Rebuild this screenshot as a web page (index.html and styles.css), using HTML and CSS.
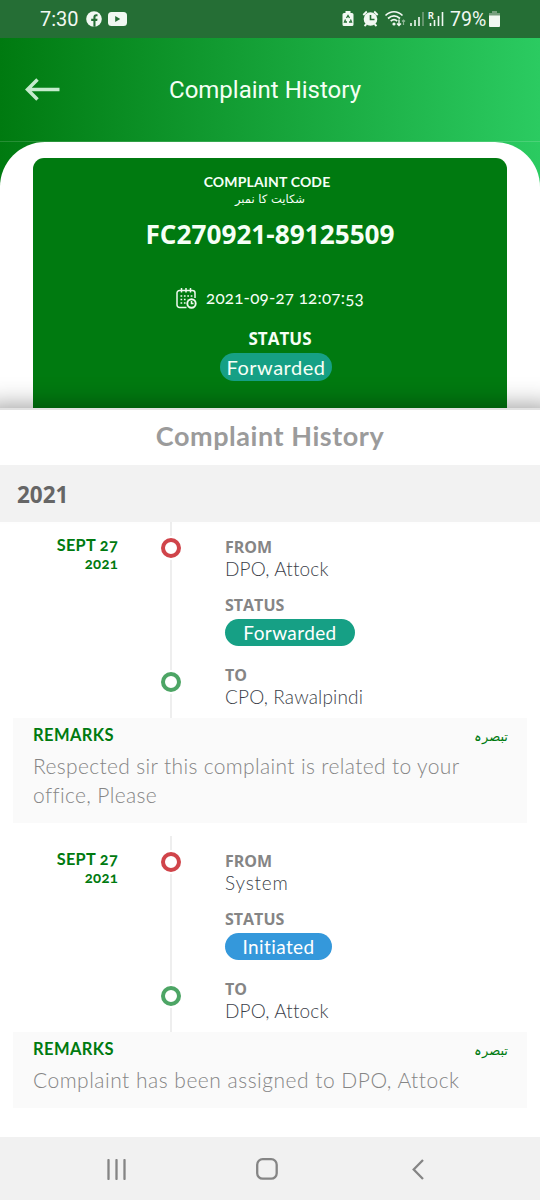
FILE: index.html
```html
<!DOCTYPE html>
<html lang="en">
<head>
    <meta charset="UTF-8">
    <title>Complaint History</title>
    <link rel="stylesheet" href="styles.css">
</head>
<body>
    <div class="statusbar">
        <span class="clock">7:30</span>
        <svg width="16" height="16" viewBox="0 0 16 16"><circle cx="8" cy="8" r="7.8" fill="#f1f8f2"/><path d="M7.400 15.800V9.900H5.200V7.700h2.200V6.200c0-2 1-3 2.900-3h1.200v2h-1c-.8 0-1 .4-1 1.100v1.400h2l-.3 2.200H9.500v5.900z" fill="#256e35"/></svg>
        <svg class="yt" width="19" height="14" viewBox="0 0 19 14"><rect width="19" height="14" rx="3.500" fill="#f1f8f2"/><path d="M7.200 4v6l5-3z" fill="#256e35"/></svg>
        <div class="status-icons">
            <svg width="106" height="20" viewBox="0 0 106 20">
                <path d="M3.500 4V2h5v2H10a1.500 1.500 0 0 1 1.500 1.500v10A1.500 1.500 0 0 1 10 17H2a1.500 1.500 0 0 1-1.500-1.500v-10A1.500 1.500 0 0 1 2 4z" fill="#f1f8f2"/>
                <path d="M4.500 9L6 6.500 7.500 9M8.500 10.500l1 2.500H7M5 13H2.500l1-2.500" fill="none" stroke="#256e35" stroke-width="1.300"/>
                <circle cx="28.500" cy="10" r="6.800" fill="#f1f8f2"/>
                <path d="M21.300 6l3.500-3.500M35.700 6l-3.500-3.500M24.500 15l-2 2M32.500 15l2 2" stroke="#f1f8f2" stroke-width="1.800"/>
                <path d="M28.500 6v4.500h4" fill="none" stroke="#256e35" stroke-width="1.600"/>
                <path d="M43.500 6.500c5-5 12-5 17 0M46 9.500c4-3.500 8-3.500 12 0M48.700 12.200c2.200-2 4.500-2 6.500 0" fill="none" stroke="#f1f8f2" stroke-width="1.700"/>
                <circle cx="52" cy="15" r="1.600" fill="#f1f8f2"/>
                <path d="M57 10.500v6M55 14.500l2 2 2-2" fill="none" stroke="#f1f8f2" stroke-width="1.400"/>
                <path d="M61.500 16v-5M60 12.500l1.500-1.500 1.500 1.500" fill="none" stroke="#8bb493" stroke-width="1.200"/>
                <path d="M69 17v-3M73 17v-6M77 17V8M88.500 17v-3M92.500 17v-6M96.500 17V7M100.500 17V3" stroke="#f1f8f2" stroke-width="1.600"/>
                <path d="M81 17V3" stroke="#769f7d" stroke-width="1.600"/>
                <text x="86" y="9.500" class="roaming">R</text>
            </svg>
            <span class="battery-text">79%</span>
            <svg width="12" height="16" viewBox="0 0 12 16">
                <path d="M3 0h5v2h3v3H0V2h3z" fill="#769f7d"/>
                <path d="M0 4.500h11V15a1 1 0 0 1-1 1H1a1 1 0 0 1-1-1z" fill="#f1f8f2"/>
            </svg>
        </div>
    </div>
    <header class="header">
        <svg class="back" width="35" height="23" viewBox="0 0 35 23"><path d="M34.500 11.500H2.500M12.500 1.500L2.500 11.500l10 10" fill="none" stroke="#c5ebcd" stroke-width="3.500"/></svg>
        <h1>Complaint History</h1>
    </header>
    <main class="top">
        <div class="sheet">
            <section class="card">
                <div class="code-label">COMPLAINT CODE</div>
                <div class="code-urdu" lang="ur" dir="rtl">شکایت کا نمبر</div>
                <div class="code">FC270921-89125509</div>
                <div class="date">
                    <svg width="21" height="21" viewBox="0 0 21 21" fill="none" stroke="#f0faf0" stroke-width="1.500">
                        <path d="M10.500 19.500H3.500A2.500 2.500 0 0 1 1 17V5a2.500 2.500 0 0 1 2.500-2.500h13A2.500 2.500 0 0 1 19 5v5M5.500 0v4.500M10 0v4.500M14.500 0v4.500"/>
                        <path d="M4.500 8h12M4.500 11.500h7M4.500 15h6" stroke-dasharray="1.700 1.700"/>
                        <circle cx="15.500" cy="15.500" r="4.200" stroke-width="1.900"/>
                        <path d="M15.500 13v2.500h2"/>
                    </svg>
                    <span>2021-09-27 12:07:53</span>
                </div>
                <div class="status-label">STATUS</div>
                <div class="status">Forwarded</div>
            </section>
        </div>
    </main>
    <h2 class="title">Complaint History</h2>
    <div class="year">2021</div>
    <section class="entry">
        <div class="when"><div class="day">SEPT 27</div><div class="yr">2021</div></div>
        <div class="line"><i class="dot red"></i><i class="dot green"></i></div>
        <div class="info">
            <div class="label">FROM</div>
            <div class="value">DPO, Attock</div>
            <div class="label">STATUS</div>
            <div class="pill forwarded">Forwarded</div>
            <div class="label">TO</div>
            <div class="value">CPO, Rawalpindi</div>
        </div>
    </section>
    <section class="remarks">
        <div class="remarks-head"><span>REMARKS</span><span class="urdu" lang="ur" dir="rtl">تبصرہ</span></div>
        <p>Respected sir this complaint is related to your<br>office, Please</p>
    </section>
    <section class="entry">
        <div class="when"><div class="day">SEPT 27</div><div class="yr">2021</div></div>
        <div class="line"><i class="dot red"></i><i class="dot green"></i></div>
        <div class="info">
            <div class="label">FROM</div>
            <div class="value system">System</div>
            <div class="label">STATUS</div>
            <div class="pill initiated">Initiated</div>
            <div class="label">TO</div>
            <div class="value">DPO, Attock</div>
        </div>
    </section>
    <section class="remarks last">
        <div class="remarks-head"><span>REMARKS</span><span class="urdu" lang="ur" dir="rtl">تبصرہ</span></div>
        <p class="assigned">Complaint has been assigned to DPO, Attock</p>
    </section>
    <nav class="navbar">
        <svg width="20" height="21" viewBox="0 0 20 21"><path d="M1.500 1v19M9.500 1v19M17.500 1v19" stroke="#858585" stroke-width="2.300" stroke-linecap="round"/></svg>
        <svg width="22" height="22" viewBox="0 0 22 22"><rect x="1.200" y="1.200" width="19.500" height="19.500" rx="5.500" fill="none" stroke="#858585" stroke-width="2.300"/></svg>
        <svg width="12" height="21" viewBox="0 0 12 21"><path d="M11 1L1.700 10.500 11 20" fill="none" stroke="#858585" stroke-width="2.300"/></svg>
    </nav>
</body>
</html>
```
FILE: styles.css
```css
* {
    box-sizing: border-box;
}
body {
    margin: 0;
    width: 540px;
    height: 1200px;
    display: flex;
    flex-direction: column;
    background-color: #fff;
    font-family: Lato, sans-serif;
    font-variant-ligatures: none;
    overflow: hidden;
}
h1, h2, p {
    margin: 0;
}
svg {
    display: block;
    flex-shrink: 0;
}
.statusbar {
    height: 38px;
    flex-shrink: 0;
    display: flex;
    align-items: center;
    padding-left: 40px;
    background-color: #256e35;
    color: #f1f8f2;
}
.clock {
    width: 46px;
    font: 20px/40px Roboto, sans-serif;
}
.yt {
    margin-left: 6px;
}
.status-icons {
    display: flex;
    align-items: center;
    margin-left: auto;
    padding-right: 39px;
}
.roaming {
    font: bold 9px Roboto, sans-serif;
    fill: #f1f8f2;
}
.battery-text {
    width: 41px;
    padding-left: 2px;
    font: 19.5px/24px Roboto, sans-serif;
    padding-top: 2px;
}
.header {
    height: 104px;
    flex-shrink: 0;
    display: grid;
    grid-template-columns: 130px 270px 1fr;
    align-items: center;
    border-bottom: 1px solid rgba(255, 255, 255, .15);
    background: linear-gradient(90deg, #007a10, #2bcb61) border-box;
}
.back {
    margin: 0 0 1px 25px;
}
h1 {
    color: #f4fff4;
    font: 24px/30px Roboto, sans-serif;
    text-align: center;
}
.top {
    height: 266px;
    flex-shrink: 0;
    background: linear-gradient(90deg, #007a10, #2bcb61);
}
.sheet {
    height: 100%;
    padding: 16px 33px 0;
    border-radius: 45px 45px 0 0;
    background-color: #fff;
}
.card {
    height: 250px;
    padding-top: 14px;
    border-radius: 11px 11px 0 0;
    background-color: #007a10;
    color: #f6fff6;
    text-align: center;
}
.code-label {
    padding-right: 6px;
    font-size: 14px;
    font-weight: bold;
    letter-spacing: .15px;
    line-height: 19px;
}
.code-urdu {
    font: 11.5px/16px "DejaVu Sans", sans-serif;
}
.code {
    margin-top: 11px;
    font: bold 26.2px/32px "Open Sans", sans-serif;
}
.date {
    display: flex;
    justify-content: center;
    gap: 9px;
    height: 22px;
    margin-top: 38px;
    font-size: 17px;
    font-variant-numeric: oldstyle-nums;
    letter-spacing: .2px;
    line-height: 20px;
}
.status-label {
    margin-top: 18px;
    padding-left: 20px;
    font: bold 17px/22px "Open Sans", sans-serif;
}
.status {
    width: 112px;
    height: 28px;
    margin: 3px 0 0 187px;
    border-radius: 14px;
    background-color: #16a085;
    font-size: 20px;
    letter-spacing: .5px;
    line-height: 29px;
}
.title {
    position: relative;
    height: 57px;
    flex-shrink: 0;
    padding-top: 10px;
    border-top: 2px solid #e2e2e2;
    background-color: #fff;
    box-shadow: 0 14px 24px 16px rgba(0, 0, 0, .4);
    color: #9b9b9b;
    font-size: 27px;
    letter-spacing: .55px;
    line-height: 32px;
    text-align: center;
}
.year {
    position: relative;
    height: 57px;
    flex-shrink: 0;
    padding-left: 17px;
    background-color: #f2f2f2;
    color: #666;
    font: bold 22.5px/59px "Open Sans", sans-serif;
}
.entry {
    height: 196px;
    flex-shrink: 0;
    display: grid;
    grid-template-columns: 118px 43px 20px 44px 1fr;
}
.when {
    padding-top: 13px;
    color: #007a10;
    font-weight: bold;
    font-variant-numeric: oldstyle-nums;
    text-align: right;
}
.day {
    font-size: 16.3px;
    letter-spacing: .3px;
    line-height: 20px;
}
.yr {
    font-size: 15px;
    letter-spacing: .2px;
    line-height: 16px;
}
.line {
    grid-column: 3;
    display: flex;
    flex-direction: column;
    align-items: center;
    gap: 114.5px;
    padding-top: 15.5px;
    background: linear-gradient(#eee, #eee) center / 2px 100% no-repeat;
}
.dot {
    width: 20px;
    height: 20px;
    flex-shrink: 0;
    border: 4px solid #d0444a;
    border-radius: 50%;
    background-color: #fff;
    box-shadow: 0 0 0 2px #fff;
}
.green {
    border-color: #4da565;
}
.info {
    grid-column: 5;
    padding-top: 15px;
}
.label {
    height: 20px;
    color: #858585;
    font: bold 16px/21px "Open Sans", sans-serif;
}
.value {
    height: 38px;
    color: #3c3f4a;
    font-size: 19px;
    font-weight: 300;
    letter-spacing: .15px;
    line-height: 23px;
}
.system {
    letter-spacing: .8px;
}
.pill {
    width: 130px;
    height: 27px;
    margin: 4px 0 19px;
    border-radius: 14px;
    background-color: #16a085;
    color: #fff;
    font-size: 19px;
    letter-spacing: .4px;
    line-height: 27px;
    text-align: center;
}
.initiated {
    width: 107px;
    background-color: #3498db;
}
.remarks {
    height: 105px;
    flex-shrink: 0;
    margin: 0 13px 13px;
    padding: 7px 19px 0 20px;
    background-color: #fafafa;
}
.remarks-head {
    display: flex;
    justify-content: space-between;
    height: 27px;
    color: #007a10;
    font-size: 16.5px;
    font-weight: bold;
    letter-spacing: .4px;
    line-height: 21px;
}
.urdu {
    font: 13px/24px "DejaVu Sans", sans-serif;
    letter-spacing: 0;
}
.remarks p {
    color: #858585;
    font-size: 21px;
    font-weight: 300;
    letter-spacing: .35px;
    line-height: 28.5px;
    white-space: nowrap;
}
.remarks .assigned {
    letter-spacing: .5px;
}
.last {
    height: 76px;
    margin-bottom: 0;
}
.navbar {
    height: 63px;
    flex-shrink: 0;
    display: grid;
    grid-template-columns: 150px 151px 151px;
    justify-content: center;
    justify-items: center;
    align-items: center;
    margin-top: auto;
    padding: 1px 5px 0 0;
    background-color: #f1f1f1;
}
```
